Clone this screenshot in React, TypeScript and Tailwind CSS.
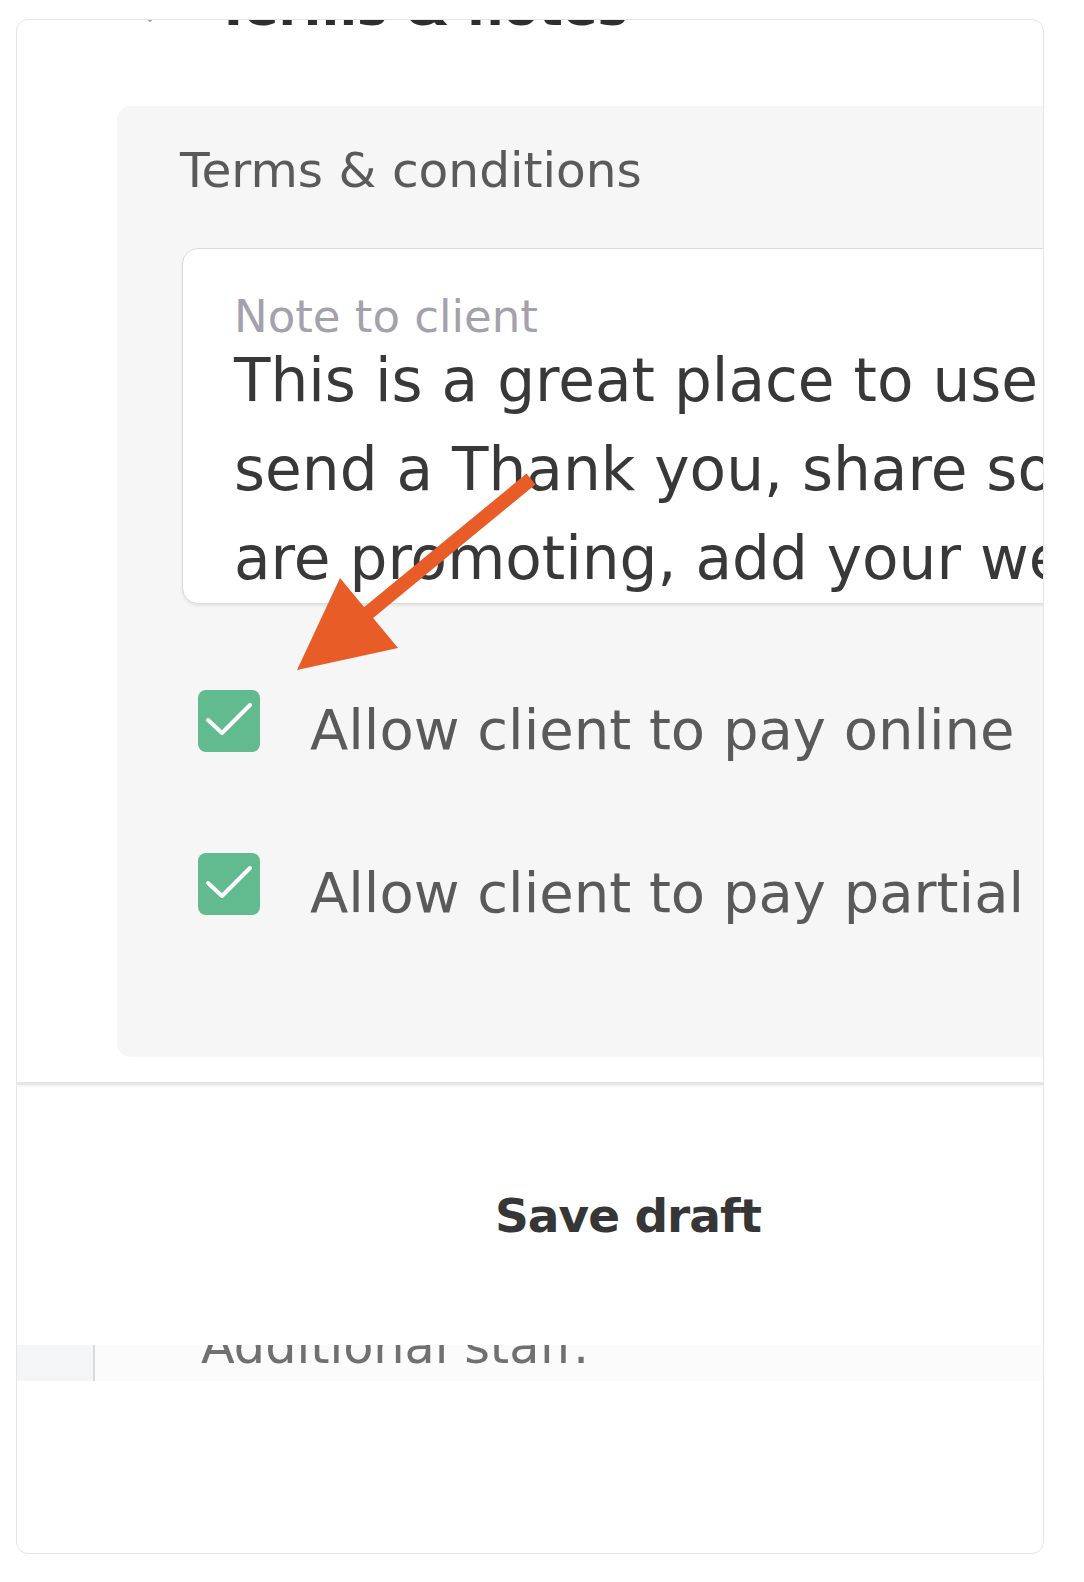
import React from "react";

const font = { fontFamily: '"DejaVu Sans", "Liberation Sans", sans-serif' };

function CheckBox() {
  return (
    <div className="w-[62px] h-[62px] shrink-0 rounded-[8px] bg-[#62bb8f]">
      <svg width="62" height="62" viewBox="0 0 62 62" fill="none">
        <path d="M10 30 L24 43 L52 15" stroke="#ffffff" strokeWidth="4" strokeLinecap="round" strokeLinejoin="round" />
      </svg>
    </div>
  );
}

export default function App() {
  return (
    <div className="relative w-[1084px] h-[1582px] bg-white pt-[19px] pl-[16px]" style={font}>
      <div className="w-[1028px] h-[1535px] border border-[#e4e4e9] rounded-[12px] overflow-hidden flex flex-col items-start bg-white">
        {/* section title, scrolled mostly out of view */}
        <div className="mt-[-38px] h-[51px] shrink-0 flex items-start pl-[121px]">
          <svg className="mt-[24px]" width="24" height="24" viewBox="0 0 24 24" fill="none" stroke="#9aa3b5" strokeWidth="2" strokeLinecap="round" strokeLinejoin="round">
            <path d="m6 9 6 6 6-6" />
          </svg>
          <div className="ml-[54px] text-[51px] leading-none font-bold text-[#2e2e2e] whitespace-nowrap">Terms &amp; notes</div>
        </div>

        {/* gray panel */}
        <div className="mt-[73px] ml-[100px] w-[1100px] h-[951px] shrink-0 bg-[#f6f6f6] rounded-[14px] pt-[40px] pl-[63px] flex flex-col items-start">
          <div className="text-[48.6px] leading-none text-[#5a5a5a] whitespace-nowrap">Terms &amp; conditions</div>

          <div className="mt-[53px] ml-[2px] w-[1000px] h-[356px] shrink-0 bg-white border-[1.5px] border-[#dadada] rounded-[16px] shadow-[0_2px_3px_rgba(0,0,0,0.07)] overflow-hidden pl-[51px] pt-[45px]">
            <div className="text-[45px] leading-none text-[#a3a1ab] whitespace-nowrap">Note to client</div>
            <div className="mt-[-3px] text-[59.7px] leading-[89px] text-[#383838] whitespace-nowrap">
              <div>This is a great place to use this space to</div>
              <div>send a Thank you, share some products you</div>
              <div>are promoting, add your website link</div>
            </div>
          </div>

          <div className="mt-[86px] ml-[18px] flex flex-col gap-[101px]">
            <div className="flex items-start h-[62px]">
              <CheckBox />
              <div className="ml-[50px] mt-[12px] text-[56px] leading-none text-[#5a5a5a] whitespace-nowrap">Allow client to pay online</div>
            </div>
            <div className="flex items-start h-[62px]">
              <CheckBox />
              <div className="ml-[50px] mt-[12px] text-[56px] leading-none text-[#5a5a5a] whitespace-nowrap">Allow client to pay partial amount</div>
            </div>
          </div>
        </div>

        {/* separator */}
        <div className="mt-[25px] w-[1026px] h-[3px] shrink-0 bg-[#e6e6e6] shadow-[0_1px_3px_rgba(0,0,0,0.08)]" />

        <div className="mt-[107px] ml-[478px] text-[47px] leading-none font-bold tracking-[-1px] text-[#363636] whitespace-nowrap">Save draft</div>

        {/* partially visible row */}
        <div className="mt-[106px] w-[1026px] h-[36px] shrink-0 flex overflow-hidden bg-[#fbfbfb]">
          <div className="w-[78px] h-full shrink-0 bg-[#f4f5f7] border-r-2 border-[#dadada]" />
          <div className="ml-[106px] mt-[-23px] text-[49.3px] leading-none text-[#707070] whitespace-nowrap">Additional staff.</div>
        </div>
      </div>

      {/* annotation arrow */}
      <svg className="absolute top-0 left-0 pointer-events-none" width="1084" height="1582" viewBox="0 0 1084 1582">
        <line x1="531" y1="479" x2="362" y2="618" stroke="#e85d27" strokeWidth="14" strokeLinecap="butt" />
        <polygon points="297,670 340,578 398,648" fill="#e85d27" />
      </svg>
    </div>
  );
}
